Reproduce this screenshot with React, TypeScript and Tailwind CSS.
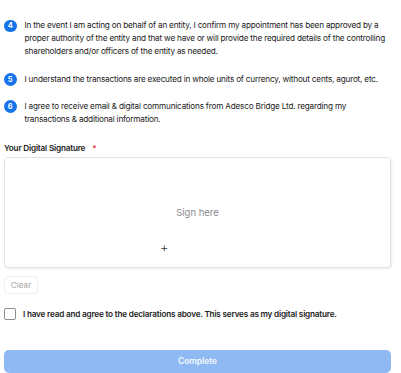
import React from "react";

const items = [
  {
    n: 4,
    text: "In the event I am acting on behalf of an entity, I confirm my appointment has been approved by a proper authority of the entity and that we have or will provide the required details of the controlling shareholders and/or officers of the entity as needed.",
  },
  {
    n: 5,
    text: "I understand the transactions are executed in whole units of currency, without cents, agurot, etc.",
  },
  {
    n: 6,
    text: "I agree to receive email & digital communications from Adesco Bridge Ltd. regarding my transactions & additional information.",
  },
];

export default function App() {
  return (
    <div
      className="w-[401px] h-[373px] overflow-hidden bg-white pl-[4px] pr-[10px] pt-[19px] text-[#1d1d1f]"
      style={{ fontFamily: "Inter, 'Noto Sans', Arial, sans-serif" }}
    >
      <div className="flex flex-col gap-[14px]">
        {items.map((it) => (
          <div key={it.n} className="flex items-start gap-[8px]">
            <div className="mt-[0.5px] flex h-[12.5px] w-[12.5px] shrink-0 items-center justify-center rounded-full bg-[#1673ea] text-[7.5px] font-bold leading-none text-white">
              {it.n}
            </div>
            <p className="text-[8.2px] leading-[13.2px] tracking-[-0.2px] text-[#222]">{it.text}</p>
          </div>
        ))}
      </div>

      <div className="mt-[16px] flex items-center text-[8.2px] font-semibold leading-[13px] tracking-[-0.2px] text-[#222]">
        Your Digital Signature
        <span className="ml-[7px] text-[#e5322d]">*</span>
      </div>

      <div className="relative mt-[2px] flex h-[111px] items-center justify-center rounded-[4px] border border-[#e2e2e4] shadow-[1px_1px_2px_rgba(0,0,0,0.08)]">
        <span className="text-[9.5px] text-[#8a8a8e]">Sign here</span>
        <span className="absolute left-[155px] top-[83px] text-[13px] font-light leading-none text-[#333]">+</span>
      </div>

      <button className="mt-[8px] h-[18px] w-[34px] rounded-[4px] border border-[#efefef] text-[8.2px] text-[#a8a8a8]">
        Clear
      </button>

      <div className="mt-[13px] flex h-[13px] items-center gap-[7px]">
        <div className="h-[12px] w-[12px] shrink-0 rounded-[2px] border border-[#8e8e93]" />
        <span className="text-[8.2px] font-semibold tracking-[-0.2px] text-[#222]">
          I have read and agree to the declarations above. This serves as my digital signature.
        </span>
      </div>

      <button className="mt-[30px] flex h-[23px] w-full items-center justify-center rounded-[5px] bg-[#8fb9f2] text-[8.4px] font-semibold text-white/90">
        Complete
      </button>
    </div>
  );
}
